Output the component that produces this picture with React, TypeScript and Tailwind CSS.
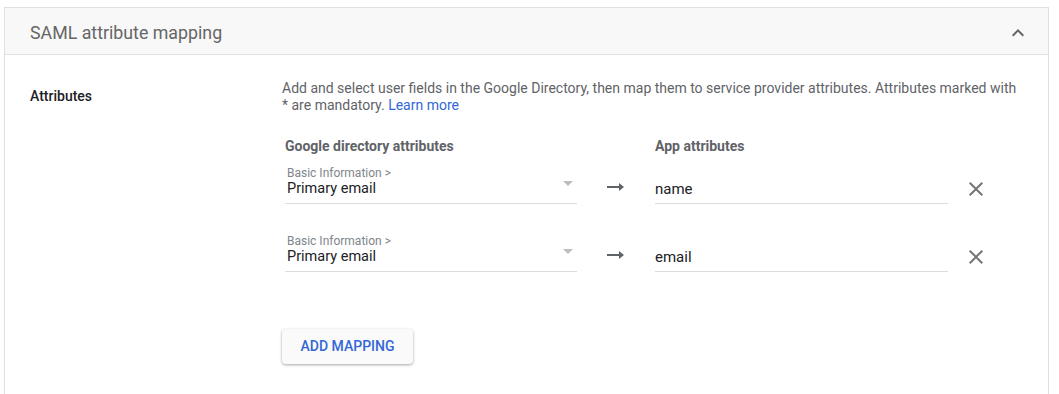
import React from "react";

function Chevron() {
  return (
    <svg width="24" height="24" viewBox="0 0 24 24" fill="#5f6368">
      <path d="M12 8l-6 6 1.41 1.41L12 10.83l4.59 4.58L18 14z" />
    </svg>
  );
}

function Close() {
  return (
    <svg width="24" height="24" viewBox="0 0 24 24" fill="#757575">
      <path d="M19 6.41L17.59 5 12 10.59 6.41 5 5 6.41 10.59 12 5 17.59 6.41 19 12 13.41 17.59 19 19 17.59 13.41 12z" />
    </svg>
  );
}

function Arrow() {
  return (
    <svg width="18" height="10" viewBox="0 0 18 10" fill="#5f6368">
      <rect x="0" y="4" width="14" height="2" />
      <path d="M12 1l5 4-5 4z" />
    </svg>
  );
}

function Row({ value }: { value: string }) {
  return (
    <div className="flex items-end h-[42px]">
      <div className="w-[292px] border-b border-[#dadce0] h-[40px] flex items-end justify-between pb-[5px] pl-[2px] relative">
        <div className="flex flex-col">
          <span className="text-[12px] leading-[14px] text-[#80868b]">Basic Information &gt;</span>
          <span className="text-[14.5px] leading-[18px] text-[#202124]">Primary email</span>
        </div>
        <div className="mb-[12px] mr-[4px] w-0 h-0 border-l-[5px] border-r-[5px] border-t-[5px] border-l-transparent border-r-transparent border-t-[#bdbdbd]" />
      </div>
      <div className="w-[78px] flex justify-center pb-[12px]">
        <Arrow />
      </div>
      <div className="w-[293px] border-b border-[#dadce0] h-[30px] flex items-end pb-[4px]">
        <span className="text-[15px] leading-[20px] text-[#202124]">{value}</span>
      </div>
      <div className="ml-[16px] pb-[3px] text-[#757575]">
        <Close />
      </div>
    </div>
  );
}

export default function App() {
  return (
    <div className="w-[1059px] h-[394px] overflow-hidden bg-white pl-[4px] pt-[7px] pr-[10px] font-['Roboto',sans-serif]">
      <div className="border border-[#e0e0e0] h-[420px]">
        <div className="h-[47px] bg-[#f8f8f8] border-b border-[#e0e0e0] flex items-center justify-between pl-[25px] pr-[18px] pt-[4px]">
          <span className="text-[17.8px] text-[#666666]">SAML attribute mapping</span>
          <Chevron />
        </div>
        <div className="flex pt-[25px]">
          <div className="w-[277px] pl-[25px] pt-[8px] text-[14px] font-medium text-[#202124] leading-[16px]">
            Attributes
          </div>
          <div className="flex-1">
            <p className="text-[14px] leading-[16.5px] text-[#5f6368] pr-[30px]">
              Add and select user fields in the Google Directory, then map them to service provider attributes. Attributes marked with * are mandatory.{" "}
              <a className="text-[#3367d6]">Learn more</a>
            </p>
            <div className="pl-[3px] mt-[25px]">
              <div className="flex text-[14px] font-bold text-[#5f6368] leading-[16px]">
                <div className="w-[370px]">Google directory attributes</div>
                <div>App attributes</div>
              </div>
              <div className="mt-[8px]">
                <Row value="name" />
              </div>
              <div className="mt-[26px]">
                <Row value="email" />
              </div>
            </div>
            <button className="mt-[57px] h-[35px] w-[131px] rounded-[4px] bg-[#fafafa] text-[#3367d6] text-[14px] font-medium shadow-[0_1px_3px_rgba(0,0,0,0.35)]">
              ADD MAPPING
            </button>
          </div>
        </div>
      </div>
    </div>
  );
}
